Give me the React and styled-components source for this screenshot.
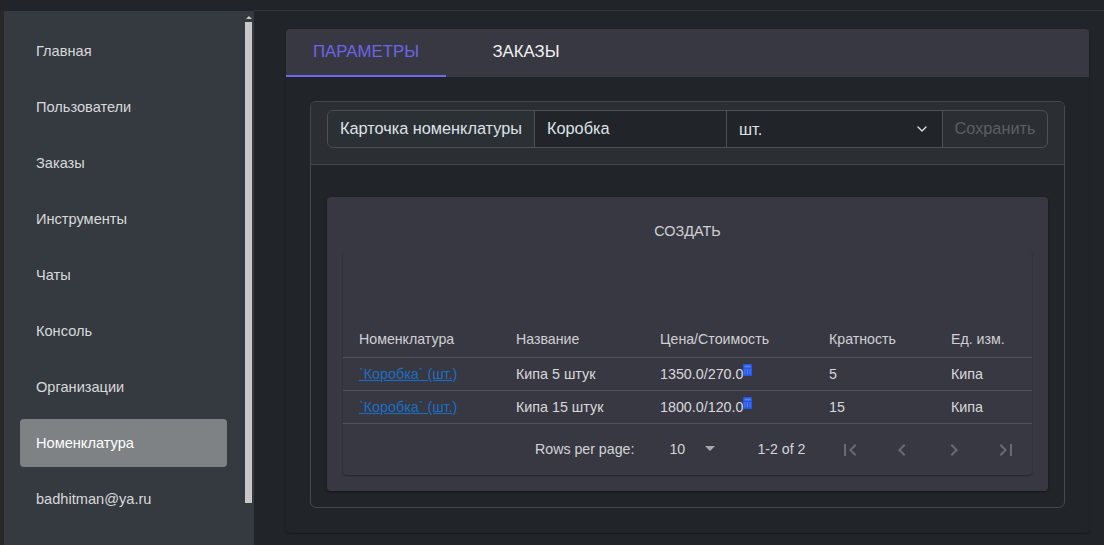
import React from "react";
import styled, { createGlobalStyle } from "styled-components";
import { ChevronDown } from "lucide-react";

const GlobalStyle = createGlobalStyle`
  html, body {
    margin: 0;
    height: 100%;
    overflow: hidden;
    background: #212529;
    font-family: "Liberation Sans", Arial, sans-serif;
  }
  * { box-sizing: border-box; }
`;

const Page = styled.div`
  width: 1104px;
  height: 545px;
  display: flex;
  flex-direction: column;
  background: #212529;
  overflow: hidden;
`;

const TopBar = styled.div`
  flex: 0 0 11px;
  display: flex;
`;
const TopLeft = styled.div`
  width: 254px;
  background: #212529;
`;
const TopRight = styled.div`
  flex: 1;
  border-bottom: 1px solid #33373c;
`;

const Body = styled.div`
  flex: 1;
  display: flex;
  min-height: 0;
`;

const SideStrip = styled.div`
  width: 4px;
  background: #26282a;
`;

const Sidebar = styled.nav`
  position: relative;
  width: 250px;
  background: #343a40;
  padding: 16px 27px 0 16px;
  display: flex;
  flex-direction: column;
  gap: 8px;
`;

const NavItem = styled.div`
  height: 48px;
  flex: none;
  display: flex;
  align-items: center;
  padding-left: 16px;
  border-radius: 4px;
  font-size: 14.6px;
  color: ${(p) => (p.$active ? "#fff" : "rgba(255,255,255,.82)")};
  font-weight: ${(p) => (p.$active ? 500 : 400)};
  background: ${(p) => (p.$active ? "#7e8284" : "transparent")};
`;

const ScrollTrack = styled.div`
  position: absolute;
  right: 2px;
  top: 0;
  bottom: 0;
  width: 7px;
  display: flex;
  flex-direction: column;
  align-items: center;
`;
const ScrollArrow = styled.div`
  margin-top: 5px;
  width: 0;
  height: 0;
  border-left: 3px solid transparent;
  border-right: 3px solid transparent;
  border-bottom: 3px solid #c8c8c8;
`;
const ScrollThumb = styled.div`
  margin-top: 3px;
  width: 7px;
  height: 481px;
  background: #c8c8c8;
`;

const Main = styled.main`
  flex: 1;
  padding: 18px 15px 0 32px;
`;

const TabShell = styled.div`
  height: 504px;
  border-radius: 4px;
  background: #212529;
  box-shadow: 0 1px 2px rgba(0, 0, 0, .35);
`;

const TabBar = styled.div`
  height: 48px;
  display: flex;
  background: #383842;
  border-radius: 4px 4px 0 0;
`;

const Tab = styled.div`
  width: 160px;
  display: flex;
  align-items: center;
  justify-content: center;
  font-size: 16.8px;
  text-transform: uppercase;
  color: ${(p) => (p.$active ? "#6f64e8" : "#f2f2f2")};
  border-bottom: 2px solid ${(p) => (p.$active ? "#7367f0" : "transparent")};
`;

const TabBody = styled.div`
  padding: 24px 24px 0;
`;

const Card = styled.section`
  width: 755px;
  height: 407px;
  border: 1px solid #45494e;
  border-radius: 6px;
  overflow: hidden;
`;

const CardHeader = styled.div`
  height: 63px;
  padding: 8px 16px;
  background: #2b2f34;
  border-bottom: 1px solid #45494e;
`;

const InputGroup = styled.div`
  display: flex;
  width: 721px;
  height: 38px;
  border: 1px solid #4d5156;
  border-radius: 6px;
  font-size: 16.3px;
  color: #dee2e6;
  overflow: hidden;
`;

const GroupLabel = styled.div`
  width: 207px;
  display: flex;
  align-items: center;
  justify-content: center;
  padding-bottom: 2px;
  white-space: nowrap;
  background: #2b3035;
  border-right: 1px solid #4d5156;
`;

const GroupInput = styled.div`
  width: 192px;
  display: flex;
  align-items: center;
  padding: 0 0 2px 12px;
  background: #212529;
  border-right: 1px solid #4d5156;
`;

const GroupSelect = styled.div`
  width: 216px;
  display: flex;
  align-items: center;
  justify-content: space-between;
  padding: 0 12px;
  background: #212529;
  border-right: 1px solid #4d5156;
`;

const SaveButton = styled.div`
  flex: 1;
  display: flex;
  align-items: center;
  justify-content: center;
  padding-bottom: 2px;
  color: #5b5f63;
`;

const CardBody = styled.div`
  padding: 32px 16px 16px;
`;

const OuterPaper = styled.div`
  height: 294px;
  padding: 16px;
  background: #383842;
  border-radius: 4px;
  box-shadow: 0 1px 3px rgba(0, 0, 0, .4);
`;

const CreateRow = styled.div`
  height: 36px;
  display: flex;
  align-items: center;
  justify-content: center;
  font-size: 14.4px;
  text-transform: uppercase;
  color: #d0d0d4;
`;

const TablePaper = styled.div`
  margin-top: 1px;
  height: 225px;
  border-radius: 4px;
  background: #383842;
  box-shadow: 0 1px 2px rgba(0, 0, 0, .35);
  display: flex;
  flex-direction: column;
`;

const TableGrid = styled.div`
  margin-top: 60px;
  display: grid;
  grid-template-columns: 157px 144px 169px 122px 1fr;
`;

const HeadCell = styled.div`
  height: 48px;
  padding: 11px 0 0 16px;
  display: flex;
  align-items: center;
  font-size: 14.2px;
  color: #d0d0d4;
  border-bottom: 1px solid #515158;
`;

const Cell = styled.div`
  height: 33px;
  padding-left: 16px;
  display: flex;
  align-items: center;
  font-size: 14.3px;
  color: #d8d8dc;
  border-bottom: 1px solid #515158;
`;

const ItemLink = styled.a`
  color: #1a6fc4;
  text-decoration: underline;
`;

const CalcIcon = styled.svg`
  width: 9px;
  height: 12px;
  margin: -8px 0 0 0;
  flex: none;
`;

const Pagination = styled.div`
  flex: 1;
  display: flex;
  align-items: center;
  font-size: 14.2px;
  white-space: nowrap;
  color: #d4d4d8;
  padding: 0 0 2px 192px;
`;

const PerPage = styled.div`
  width: 88px;
  margin-left: 35px;
  display: flex;
  align-items: center;
  gap: 20px;
`;

const Caret = styled.div`
  width: 0;
  height: 0;
  border-left: 5.5px solid transparent;
  border-right: 5.5px solid transparent;
  border-top: 5px solid #a8a8ac;
`;

const PageButtons = styled.div`
  margin: 2px 0 0 32px;
  display: flex;
  gap: 28px;
`;

const PageIcon = styled.svg`
  width: 24px;
  height: 24px;
  fill: #6a6a70;
`;

function Calculator() {
  return (
    <CalcIcon viewBox="0 0 9 12">
      <rect width="9" height="12" rx="1" fill="#1f57f2" />
      <rect x="1.5" y="1.5" width="6" height="2" fill="#5f7fe0" />
      <path d="M2 5v5.5M4.5 5v5.5M7 5v5.5" stroke="#5f7fe0" strokeWidth="1" />
    </CalcIcon>
  );
}

const pageIcons = [
  "M18.41 16.59L13.82 12l4.59-4.59L17 6l-6 6 6 6zM6 6h2v12H6z",
  "M15.41 16.59L10.83 12l4.58-4.59L14 6l-6 6 6 6z",
  "M8.59 16.59L13.17 12 8.59 7.41 10 6l6 6-6 6z",
  "M5.59 7.41L10.18 12l-4.59 4.59L7 18l6-6-6-6zM16 6h2v12h-2z",
];

const navItems = ["Главная", "Пользователи", "Заказы", "Инструменты", "Чаты", "Консоль", "Организации", "Номенклатура", "badhitman@ya.ru"];

const rows = [
  { name: "Кипа 5 штук", price: "1350.0/270.0", mult: "5" },
  { name: "Кипа 15 штук", price: "1800.0/120.0", mult: "15" },
];

export default function App() {
  return (
    <Page>
      <GlobalStyle />
      <TopBar>
        <TopLeft />
        <TopRight />
      </TopBar>
      <Body>
        <SideStrip />
        <Sidebar>
          {navItems.map((item) => (
            <NavItem key={item} $active={item === "Номенклатура"}>{item}</NavItem>
          ))}
          <ScrollTrack>
            <ScrollArrow />
            <ScrollThumb />
          </ScrollTrack>
        </Sidebar>
        <Main>
          <TabShell>
            <TabBar>
              <Tab $active>Параметры</Tab>
              <Tab>Заказы</Tab>
            </TabBar>
            <TabBody>
              <Card>
                <CardHeader>
                  <InputGroup>
                    <GroupLabel>Карточка номенклатуры</GroupLabel>
                    <GroupInput>Коробка</GroupInput>
                    <GroupSelect>
                      шт.
                      <ChevronDown size={16} strokeWidth={2} />
                    </GroupSelect>
                    <SaveButton>Сохранить</SaveButton>
                  </InputGroup>
                </CardHeader>
                <CardBody>
                  <OuterPaper>
                    <CreateRow>Создать</CreateRow>
                    <TablePaper>
                      <TableGrid>
                        <HeadCell>Номенклатура</HeadCell>
                        <HeadCell>Название</HeadCell>
                        <HeadCell>Цена/Стоимость</HeadCell>
                        <HeadCell>Кратность</HeadCell>
                        <HeadCell>Ед. изм.</HeadCell>
                        {rows.map((row) => (
                          <React.Fragment key={row.name}>
                            <Cell><ItemLink href="#">`Коробка` (шт.)</ItemLink></Cell>
                            <Cell>{row.name}</Cell>
                            <Cell>{row.price}<Calculator /></Cell>
                            <Cell>{row.mult}</Cell>
                            <Cell>Кипа</Cell>
                          </React.Fragment>
                        ))}
                      </TableGrid>
                      <Pagination>
                        Rows per page:
                        <PerPage>10<Caret /></PerPage>
                        1-2 of 2
                        <PageButtons>
                          {pageIcons.map((d) => (
                            <PageIcon key={d} viewBox="0 0 24 24"><path d={d} /></PageIcon>
                          ))}
                        </PageButtons>
                      </Pagination>
                    </TablePaper>
                  </OuterPaper>
                </CardBody>
              </Card>
            </TabBody>
          </TabShell>
        </Main>
      </Body>
    </Page>
  );
}
